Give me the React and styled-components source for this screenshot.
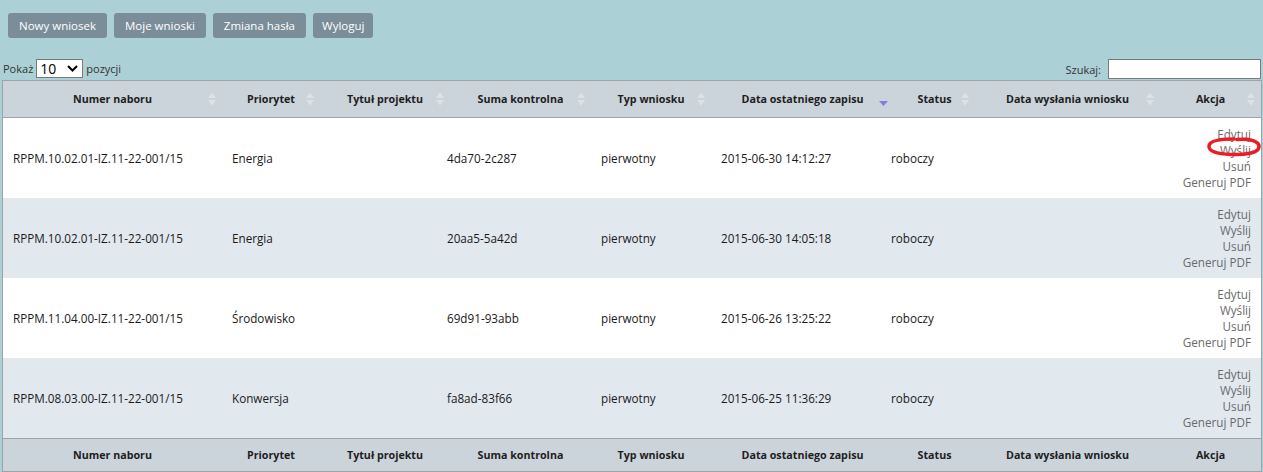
import styled, { createGlobalStyle } from "styled-components";

const GlobalStyle = createGlobalStyle`
  html, body {
    margin: 0;
    background: #abd0d6;
    font-family: "Open Sans", "Liberation Sans", sans-serif;
    color: #222;
  }
`;

const HEAD_COLS = "219px 98px 130px 141px 120px 183px 81px 185px 101px";
const BODY_COLS = "219px 98px 117px 154px 120px 170px 94px 185px 101px";

const Page = styled.div`
  padding: 13px 2px 0 2px;
`;

const Toolbar = styled.div`
  display: flex;
  gap: 7px;
  margin-left: 6px;
`;

const NavButton = styled.button`
  height: 25px;
  padding: 0 ${(p) => p.$pad || 11}px;
  border: none;
  border-radius: 3px;
  background: #7b8d99;
  color: #fff;
  font-family: inherit;
  font-size: 11.5px;
  cursor: pointer;
`;

const Controls = styled.div`
  display: flex;
  justify-content: space-between;
  align-items: flex-end;
  margin-top: 21px;
  height: 21px;
  padding-left: 1px;
  font-size: 11px;
  color: #333;
`;

const Length = styled.label`
  display: flex;
  align-items: center;
  gap: 3px;
  padding-bottom: 2px;
`;

const FakeSelect = styled.span`
  display: inline-flex;
  align-items: center;
  justify-content: space-between;
  box-sizing: border-box;
  width: 47px;
  height: 19px;
  padding: 0 4px 0 3px;
  border: 1px solid #7a7a7a;
  background: #fff;
  font-size: 14px;
  color: #000;
`;

const Search = styled.label`
  display: flex;
  align-items: center;
  gap: 7px;
  padding-bottom: 1px;
`;

const SearchInput = styled.input`
  box-sizing: border-box;
  width: 153px;
  height: 20px;
  border: 1px solid #7a7a7a;
  background: #fff;
  outline: none;
`;

const Table = styled.div`
  box-sizing: border-box;
  width: 1260px;
  border: 1px solid #9da3a7;
  border-bottom-width: 2px;
`;

const HeadRow = styled.div`
  display: grid;
  grid-template-columns: ${HEAD_COLS};
  height: ${(p) => p.$h}px;
  background: #cbd4da;
  border-top: ${(p) => (p.$foot ? "1px solid #9da3a7" : "none")};
  border-bottom: ${(p) => (p.$foot ? "none" : "1px solid #9da3a7")};
`;

const HeadCell = styled.div`
  position: relative;
  display: flex;
  align-items: center;
  justify-content: center;
  font-size: 10.7px;
  font-weight: 700;
  color: #1e1e1e;
  white-space: nowrap;
`;

const SortMark = styled.svg`
  position: absolute;
  right: 6px;
  top: 50%;
  transform: translateY(-50%);
`;

const BodyRow = styled.div`
  display: grid;
  grid-template-columns: ${BODY_COLS};
  height: 80px;
  background: ${(p) => (p.$odd ? "#e1e8ee" : "#fff")};
`;

const Cell = styled.div`
  display: flex;
  align-items: center;
  padding: 0 10px;
  font-size: 11.7px;
  color: #1a1a1a;
  white-space: nowrap;
`;

const Actions = styled.div`
  position: relative;
  display: flex;
  flex-direction: column;
  justify-content: center;
  align-items: flex-end;
  padding-right: 10px;
  font-size: 11.7px;
  line-height: 16px;
  color: #6a6a6a;
`;

const ActionLink = styled.a`
  color: inherit;
  text-decoration: none;
  cursor: pointer;
`;

const Mark = styled.svg`
  position: absolute;
  left: 46px;
  top: 18px;
`;

const headers = [
  "Numer naboru",
  "Priorytet",
  "Tytuł projektu",
  "Suma kontrolna",
  "Typ wniosku",
  "Data ostatniego zapisu",
  "Status",
  "Data wysłania wniosku",
  "Akcja",
];

const rows = [
  ["RPPM.10.02.01-IZ.11-22-001/15", "Energia", "", "4da70-2c287", "pierwotny", "2015-06-30 14:12:27", "roboczy", ""],
  ["RPPM.10.02.01-IZ.11-22-001/15", "Energia", "", "20aa5-5a42d", "pierwotny", "2015-06-30 14:05:18", "roboczy", ""],
  ["RPPM.11.04.00-IZ.11-22-001/15", "Środowisko", "", "69d91-93abb", "pierwotny", "2015-06-26 13:25:22", "roboczy", ""],
  ["RPPM.08.03.00-IZ.11-22-001/15", "Konwersja", "", "fa8ad-83f66", "pierwotny", "2015-06-25 11:36:29", "roboczy", ""],
];

function SortIcon({ sorted }) {
  if (sorted) {
    return (
      <SortMark width="9" height="14" viewBox="0 0 9 14" style={{ marginTop: 1 }}>
        <path d="M0 8 L9 8 L4.5 13 Z" fill="#7f7fe3" />
      </SortMark>
    );
  }
  return (
    <SortMark width="8" height="14" viewBox="0 0 8 14">
      <path d="M0 6 L8 6 L4 0.5 Z" fill="#dde2e6" />
      <path d="M0 8 L8 8 L4 13.5 Z" fill="#dde2e6" />
    </SortMark>
  );
}

function Header({ foot }) {
  return (
    <HeadRow $foot={foot} $h={foot ? 32 : 36}>
      {headers.map((h) => (
        <HeadCell key={h}>
          {h}
          {!foot && <SortIcon sorted={h === "Data ostatniego zapisu"} />}
        </HeadCell>
      ))}
    </HeadRow>
  );
}

export default function App() {
  return (
    <Page>
      <GlobalStyle />
      <Toolbar>
        <NavButton>Nowy wniosek</NavButton>
        <NavButton>Moje wnioski</NavButton>
        <NavButton>Zmiana hasła</NavButton>
        <NavButton $pad={9}>Wyloguj</NavButton>
      </Toolbar>
      <Controls>
        <Length>
          Pokaż
          <FakeSelect>
            10
            <svg width="11" height="7" viewBox="0 0 11 7">
              <path d="M1 1 L5.5 5.5 L10 1" fill="none" stroke="#000" strokeWidth="2" />
            </svg>
          </FakeSelect>
          pozycji
        </Length>
        <Search>
          Szukaj:
          <SearchInput type="text" />
        </Search>
      </Controls>
      <Table>
        <Header />
        {rows.map((r, i) => (
          <BodyRow key={i} $odd={i % 2 === 1}>
            {r.map((v, j) => (
              <Cell key={j}>{v}</Cell>
            ))}
            <Actions>
              <ActionLink>Edytuj</ActionLink>
              <ActionLink>Wyślij</ActionLink>
              <ActionLink>Usuń</ActionLink>
              <ActionLink>Generuj PDF</ActionLink>
              {i === 0 && (
                <Mark width="56" height="22" viewBox="0 0 56 22">
                  <path
                    d="M31 3.5 C44 2.5 53.5 5 53 11 C52.5 17 39 19 25 18.5 C10 18 2.5 15 3 10 C3.5 5 14 3 28 3"
                    fill="none"
                    stroke="#ec1c24"
                    strokeWidth="3.5"
                    strokeLinecap="round"
                  />
                </Mark>
              )}
            </Actions>
          </BodyRow>
        ))}
        <Header foot />
      </Table>
    </Page>
  );
}
